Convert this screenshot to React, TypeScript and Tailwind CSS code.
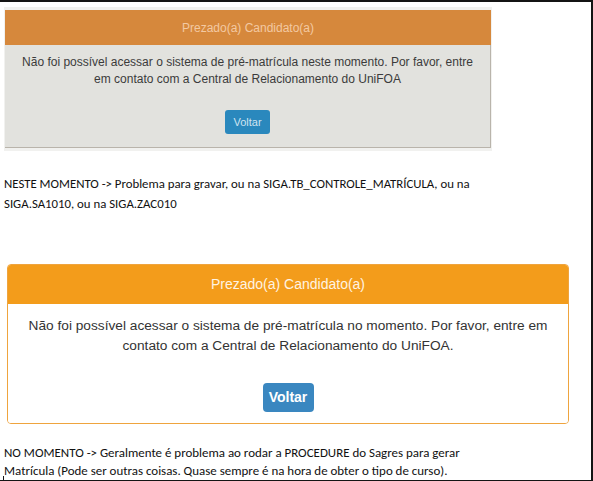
import React from "react";

const word = "font-['Carlito','Calibri','Open_Sans',sans-serif]";

export default function App() {
  return (
    <div className="w-[593px] h-[481px] bg-white border-t-2 border-r-2 border-b border-[#141414] flex flex-col overflow-hidden relative">
      {/* Photo of the old screen */}
      <div className="shrink-0 ml-[4px] mt-[5px] w-[488px] h-[144px] bg-[#f1f1ef] pt-[3px] px-[1px] pb-[3px] flex flex-col">
        <div className="shrink-0 h-[35px] bg-[#d6883c] flex items-center justify-center text-[12px] text-[#f3c9a2] font-['Liberation_Sans',Arial,sans-serif]">
          Prezado(a) Candidato(a)
        </div>
        <div className="flex-1 bg-[#e2e2de] border-b border-r border-[#b9b4ab] flex flex-col items-center pt-[9px] font-['Liberation_Sans',Arial,sans-serif] text-[12px] leading-[17px] text-[#3b3b3b]">
          <p className="text-center whitespace-nowrap">
            Não foi possível acessar o sistema de pré-matrícula neste momento. Por favor, entre
            <br />
            em contato com a Central de Relacionamento do UniFOA
          </p>
          <div className="mt-[22px] w-[45px] h-[24px] rounded-[3px] bg-[#2a88bd] flex items-center justify-center text-[11px] text-[#cfe4f1]">
            Voltar
          </div>
        </div>
      </div>

      {/* Paragraph 1 */}
      <p className={`${word} shrink-0 mt-[23px] ml-[4px] text-[12.8px] leading-[20px] text-[#111] whitespace-nowrap`}>
        NESTE MOMENTO -&gt; Problema para gravar, ou na SIGA.TB_CONTROLE_MATRÍCULA, ou na
        <br />
        SIGA.SA1010, ou na SIGA.ZAC010
      </p>

      {/* New card */}
      <div className="shrink-0 mt-[50px] ml-[7px] w-[562px] h-[160px] rounded-[4px] border border-[#efa43e] flex flex-col overflow-hidden font-['Liberation_Sans',Arial,sans-serif]">
        <div className="shrink-0 h-[39px] bg-[#f39c1b] flex items-center justify-center text-[14px] text-[#fff3e2]">
          Prezado(a) Candidato(a)
        </div>
        <div className="flex-1 bg-white flex flex-col items-center pt-[12px]">
          <p className="text-center whitespace-nowrap text-[13.7px] leading-[20px] text-[#333]">
            Não foi possível acessar o sistema de pré-matrícula no momento. Por favor, entre em
            <br />
            contato com a Central de Relacionamento do UniFOA.
          </p>
          <div className="mt-[27px] w-[51px] h-[29px] rounded-[4px] bg-[#3a87c0] flex items-center justify-center text-[14px] font-bold text-white">
            Voltar
          </div>
        </div>
      </div>

      {/* Paragraph 2 */}
      <p className={`${word} shrink-0 mt-[20px] ml-[4px] text-[12.95px] leading-[18px] text-[#111] whitespace-nowrap`}>
        NO MOMENTO -&gt; Geralmente é problema ao rodar a PROCEDURE do Sagres para gerar
        <br />
        Matrícula (Pode ser outras coisas. Quase sempre é na hora de obter o tipo de curso).
      </p>

      <div className="absolute left-[3px] bottom-0 w-px h-[4px] bg-[#141414]" />
    </div>
  );
}
